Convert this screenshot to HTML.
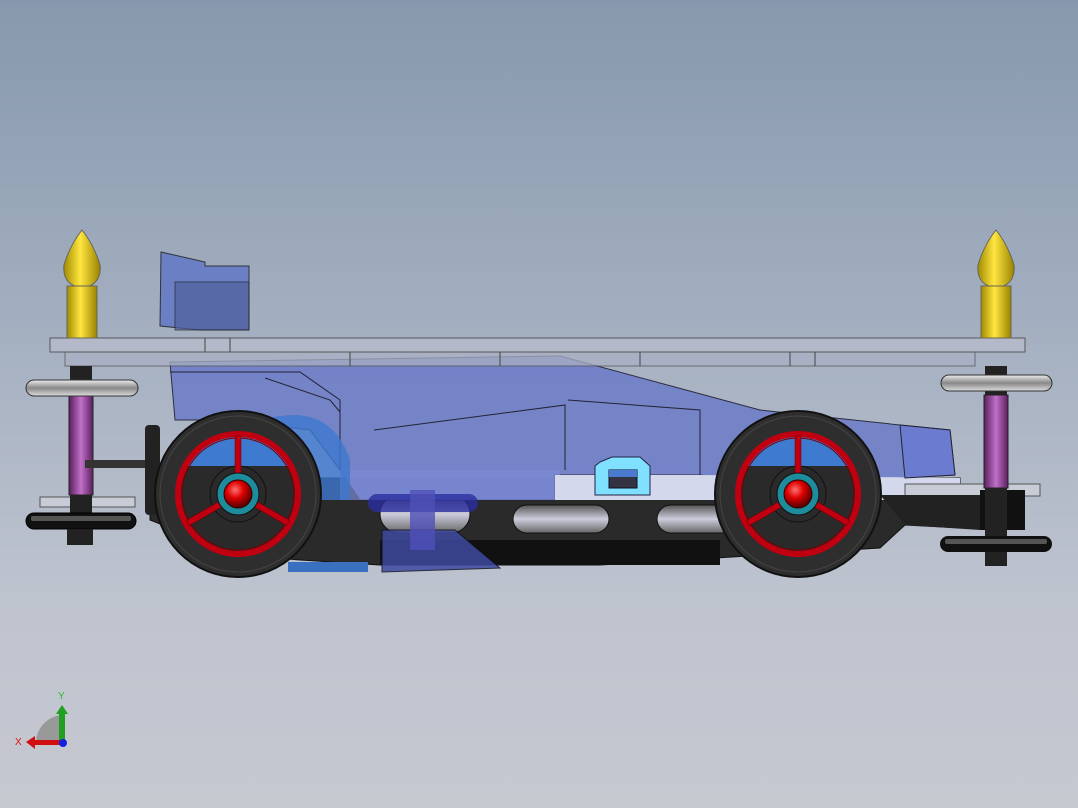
<!DOCTYPE html>
<html><head><meta charset="utf-8"><style>
html,body{margin:0;padding:0;width:1078px;height:808px;overflow:hidden}
body{background:linear-gradient(#8798ad 0%,#a3afc0 40%,#bfc4cf 75%,#c6c8d0 100%)}
svg{display:block}
</style></head><body>
<svg width="1078" height="808" viewBox="0 0 1078 808" xmlns="http://www.w3.org/2000/svg">
<defs>
<linearGradient id="cyl" x1="0" x2="1"><stop offset="0" stop-color="#5a1f5e"/><stop offset=".5" stop-color="#c070c8"/><stop offset="1" stop-color="#5a1f5e"/></linearGradient>
<linearGradient id="yel" x1="0" x2="1"><stop offset="0" stop-color="#a08a00"/><stop offset=".45" stop-color="#ffe640"/><stop offset="1" stop-color="#9a8200"/></linearGradient>
<linearGradient id="ring" x1="0" y1="0" x2="0" y2="1"><stop offset="0" stop-color="#eee"/><stop offset=".5" stop-color="#888"/><stop offset="1" stop-color="#ddd"/></linearGradient>
<linearGradient id="slot" x1="0" y1="0" x2="0" y2="1"><stop offset="0" stop-color="#555"/><stop offset=".5" stop-color="#ccd"/><stop offset="1" stop-color="#666"/></linearGradient>
<radialGradient id="hub" cx=".4" cy=".35" r=".6"><stop offset="0" stop-color="#ff7070"/><stop offset=".5" stop-color="#d00"/><stop offset="1" stop-color="#600"/></radialGradient>
<clipPath id="ci"><circle cx="0" cy="0" r="60"/></clipPath>
<g id="w">
<circle cx="0" cy="0" r="83" fill="#2e2e2e" stroke="#111" stroke-width="2"/>
<circle cx="0" cy="0" r="78" fill="none" stroke="#444" stroke-width="1"/>
<g clip-path="url(#ci)"><rect x="-70" y="-70" width="140" height="42" fill="#3d7ad0"/><rect x="-70" y="-28" width="140" height="100" fill="#2a2a2a"/></g>
<circle cx="0" cy="0" r="60" fill="none" stroke="#c00010" stroke-width="6"/>
<circle cx="0" cy="0" r="56" fill="none" stroke="#700" stroke-width="1"/>
<circle cx="0" cy="0" r="28" fill="none" stroke="#111"/>
<path d="M-3 -58 L3 -58 L3 0 L-3 0Z" fill="#c00010" stroke="#600" stroke-width=".5"/>
<path d="M-3 -58 L3 -58 L3 0 L-3 0Z" fill="#c00010" stroke="#600" stroke-width=".5" transform="rotate(120)"/>
<path d="M-3 -58 L3 -58 L3 0 L-3 0Z" fill="#c00010" stroke="#600" stroke-width=".5" transform="rotate(240)"/>
<circle cx="0" cy="0" r="21" fill="#1d8c9c" stroke="#111"/>
<circle cx="0" cy="0" r="14" fill="url(#hub)" stroke="#300"/>
</g>
</defs>
<!-- rear spoiler -->
<path d="M161 252 L205 262 L205 266 L249 266 L249 330 L200 330 L160 326 Z" fill="#6a7fc4" stroke="#333" stroke-width="1"/>
<rect x="175" y="282" width="74" height="48" fill="#50609a" opacity=".7" stroke="#223"/>
<!-- chassis black -->
<path d="M150 478 L960 478 L960 500 L1000 500 L1000 530 L905 525 L880 548 L600 565 L380 565 L300 560 L240 555 L150 520 Z" fill="#2a2a2a" stroke="#111"/>
<path d="M380 540 L720 540 L720 565 L380 565 Z" fill="#111"/>
<rect x="380" y="495" width="90" height="38" rx="19" fill="url(#slot)" stroke="#111"/>
<rect x="513" y="505" width="96" height="28" rx="14" fill="url(#slot)" stroke="#111"/>
<rect x="657" y="505" width="90" height="28" rx="14" fill="url(#slot)" stroke="#111"/>
<path d="M382 530 L455 530 L500 568 L382 572 Z" fill="#3d4aa0" opacity=".85" stroke="#112"/>
<rect x="288" y="562" width="80" height="10" fill="#3a70c0"/>
<!-- body -->
<path d="M170 362 L560 356 L760 410 L900 425 L950 430 L955 475 L900 478 L900 500 L700 475 L555 475 L555 500 L360 500 L340 470 L310 430 L230 420 L175 420 Z" fill="#7080c8" opacity=".92" stroke="#223" stroke-width="1"/>
<path d="M170 372 L300 372 L340 400 L340 470" fill="none" stroke="#223"/>
<path d="M374 430 L565 405 L565 470" fill="none" stroke="#223"/>
<path d="M568 400 L700 410 L700 475" fill="none" stroke="#223"/>
<path d="M265 378 L330 400 L340 412" fill="none" stroke="#223"/>
<rect x="340" y="470" width="220" height="30" fill="#7c8ad4" opacity=".7"/>
<path d="M555 475 L555 500 L960 500 L960 478 L700 475 Z" fill="#d4d8ec"/>
<path d="M600 462 L612 457 L640 457 L650 466 L650 495 L595 495 L595 466 Z" fill="#80e0ff" stroke="#224"/>
<rect x="609" y="470" width="28" height="18" fill="#334" stroke="#112"/>
<rect x="609" y="470" width="28" height="7" fill="#4a7ad0"/>
<path d="M900 425 L950 430 L955 475 L905 478 Z" fill="#6b7bd0" stroke="#223"/>
<path d="M262 420 Q330 400 350 460 L350 500 L262 500 Z" fill="#3d78d0" opacity=".8"/>
<rect x="368" y="494" width="110" height="18" rx="9" fill="#2a2ea0" opacity=".8"/>
<rect x="410" y="490" width="25" height="60" fill="#5050b8" opacity=".8"/>
<!-- top plate -->
<rect x="50" y="338" width="975" height="14" fill="#b8bccb" opacity=".8" stroke="#444"/>
<rect x="65" y="352" width="910" height="14" fill="#aab0c4" opacity=".75" stroke="#555"/>
<path d="M205 338 L205 352 M230 338 L230 352 M350 352 L350 366 M500 352 L500 366 M640 352 L640 366 M790 352 L790 366 M815 352 L815 366" stroke="#444"/>
<!-- left pole -->
<rect x="40" y="497" width="95" height="10" fill="#c8ccd6" stroke="#555"/>
<rect x="70" y="366" width="22" height="165" fill="#222"/>
<rect x="69" y="395" width="24" height="100" fill="url(#cyl)" stroke="#222"/>
<rect x="26" y="380" width="112" height="16" rx="8" fill="url(#ring)" stroke="#333"/>
<rect x="26" y="513" width="110" height="16" rx="8" fill="#111" stroke="#000"/>
<rect x="31" y="516" width="100" height="5" rx="2" fill="#555"/>
<rect x="67" y="529" width="26" height="16" fill="#222"/>
<path d="M82 230 Q94 245 100 265 Q102 285 82 288 Q62 285 64 265 Q70 245 82 230Z" fill="url(#yel)" stroke="#665"/>
<rect x="67" y="286" width="30" height="52" fill="url(#yel)" stroke="#665"/>
<rect x="85" y="460" width="70" height="8" fill="#333"/>
<rect x="145" y="425" width="15" height="90" rx="4" fill="#222"/>
<!-- right pole -->
<rect x="905" y="484" width="135" height="12" fill="#c8ccd6" stroke="#555"/>
<path d="M880 495 L980 495 L980 530 L905 525Z" fill="#222"/>
<rect x="980" y="490" width="45" height="40" fill="#111"/>
<rect x="985" y="366" width="22" height="200" fill="#222"/>
<rect x="984" y="395" width="24" height="93" fill="url(#cyl)" stroke="#222"/>
<rect x="941" y="375" width="111" height="16" rx="8" fill="url(#ring)" stroke="#333"/>
<rect x="940" y="536" width="112" height="16" rx="8" fill="#111"/>
<rect x="945" y="539" width="102" height="5" rx="2" fill="#555"/>
<path d="M996 230 Q1008 245 1014 265 Q1016 285 996 288 Q976 285 978 265 Q984 245 996 230Z" fill="url(#yel)" stroke="#665"/>
<rect x="981" y="286" width="30" height="52" fill="url(#yel)" stroke="#665"/>
<!-- wheels -->
<use href="#w" transform="translate(238,494)"/>
<use href="#w" transform="translate(798,494)"/>
<!-- axis triad -->
<path d="M62 742 L62 715 A28 28 0 0 0 36 742 Z" fill="#999"/>
<rect x="59" y="712" width="6" height="30" fill="#20a020"/>
<path d="M56 714 L62 705 L68 714Z" fill="#20a020"/>
<rect x="33" y="740" width="30" height="5" fill="#d01010"/>
<path d="M35 736 L26 742 L35 749Z" fill="#d01010"/>
<circle cx="63" cy="743" r="4" fill="#1020e0"/>
<text x="58" y="699" font-family="Liberation Sans,sans-serif" font-size="10" fill="#20c020">Y</text>
<text x="15" y="745" font-family="Liberation Sans,sans-serif" font-size="10" fill="#e01010">X</text>
</svg>
</body></html>
